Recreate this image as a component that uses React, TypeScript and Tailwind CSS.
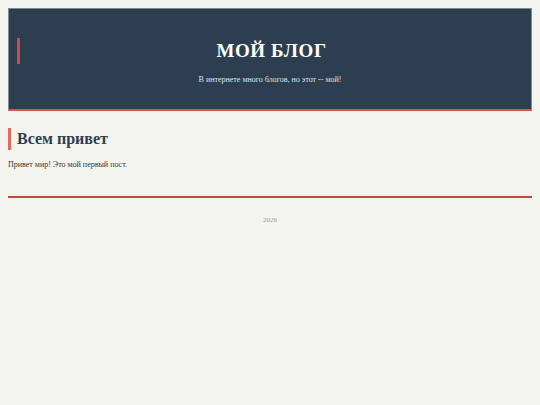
import React from "react";

const serif = { fontFamily: '"Liberation Serif", "DejaVu Serif", serif' };

export default function App() {
  return (
    <div className="min-h-[405px] w-full bg-[#f4f4ef] p-2" style={serif}>
      <header className="border border-b-0 border-[#7f8a94] bg-[#2c3e50]">
        <div className="px-2 pt-[29px] pb-[23px] border-b-2 border-[#d9534f]">
          <h1 className="border-l-[3px] border-[#c0504d] text-center text-[19px] leading-[26px] font-bold tracking-[0.6px] text-white">
            МОЙ БЛОГ
          </h1>
          <p className="mt-[10px] text-center text-[8px] leading-[12px] text-[#dfe3e8]">
            В интернете много блогов, но этот -- мой!
          </p>
        </div>
      </header>

      <main className="pt-[17px]">
        <article>
          <h2 className="border-l-[3px] border-[#e06b5d] pl-[6px] text-[16px] leading-[22px] font-bold text-[#2c3e50]">
            Всем привет
          </h2>
          <p className="mt-[9px] text-[8px] leading-[12px] text-[#333]">
            Привет мир! Это мой первый пост.
          </p>
        </article>
      </main>

      <div className="mt-[25px] h-[2px] bg-[#c0483c]" />

      <footer className="pt-[17px] text-center text-[7px] leading-[10px] text-[#999]">
        2026
      </footer>
    </div>
  );
}
